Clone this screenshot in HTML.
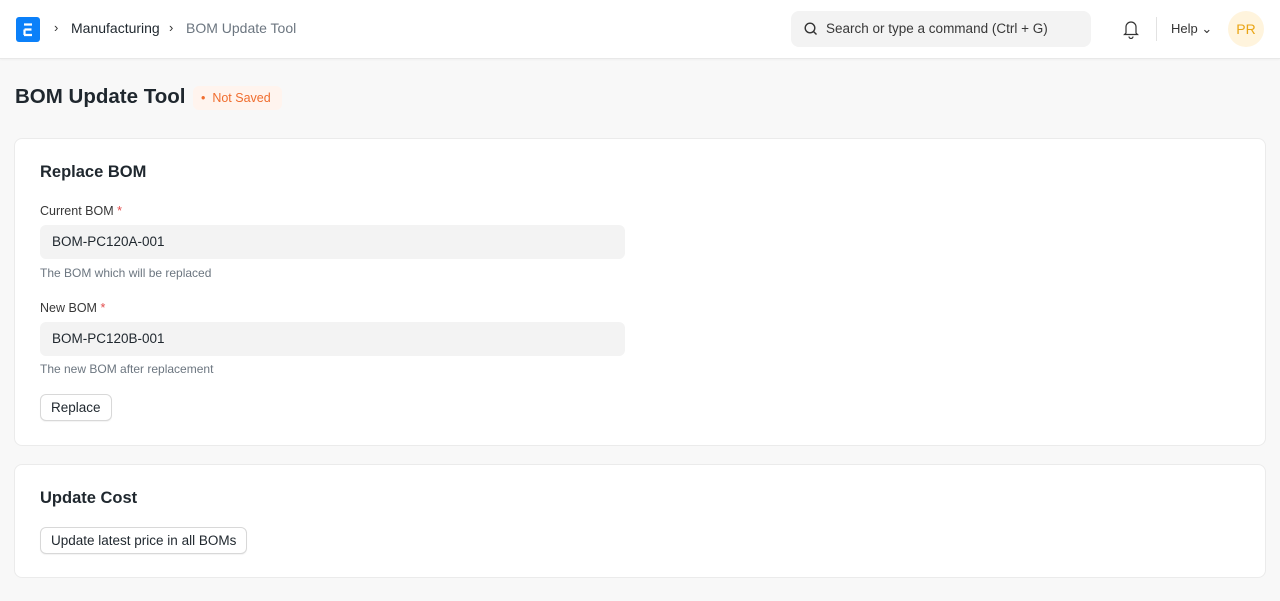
<!DOCTYPE html>
<html><head><style>
*{box-sizing:border-box;margin:0;padding:0}
body{width:1280px;height:601px;background:#f8f8f8;font-family:"Liberation Sans",sans-serif;color:#1f272e;overflow:hidden;position:relative}
.nav{position:absolute;left:0;top:0;width:1280px;height:59px;background:#fff;border-bottom:1px solid #e8e8e8;box-shadow:0 1px 2px rgba(0,0,0,.04)}
.abs{position:absolute}
.logo{left:16px;top:17px;width:24px;height:25px;background:#0b80f9;border-radius:3px}
.search{left:791px;top:11px;width:300px;height:36px;background:#f3f3f3;border-radius:8px;font-size:13.5px;color:#383838}
.card{position:absolute;left:14px;width:1252px;background:#fff;border:1px solid #ebebeb;border-radius:8px}
.lbl{font-size:12.5px;color:#383838}
.inp{position:absolute;left:25px;width:585px;height:34px;background:#f3f3f3;border-radius:6px;font-size:13.5px;padding:9px 12px;color:#1f272e}
.help{font-size:12px;color:#6c7680}
.btn{position:absolute;left:25px;height:27px;border:1px solid #d8d8d8;border-radius:6px;background:#fff;font-size:13.5px;padding:5px 10px;box-shadow:0 1px 1px rgba(0,0,0,.05)}
h2{font-size:16.5px;font-weight:bold;position:absolute;left:25px}
</style></head><body>
<div class="nav">
 <div class="abs logo"><svg width="24" height="25"><path d="M8 7.5h8M8.5 12.5h7M8 18h8M8.5 12.5v5.5" stroke="#fff" stroke-width="2.2" fill="none"/></svg></div>
 <div class="abs" style="left:54px;top:20px;font-size:13px;color:#333">›</div>
 <div class="abs" style="left:71px;top:20px;font-size:14px;color:#1f272e">Manufacturing</div>
 <div class="abs" style="left:169px;top:20px;font-size:13px;color:#333">›</div>
 <div class="abs" style="left:186px;top:20px;font-size:14px;color:#6c7680">BOM Update Tool</div>
 <div class="abs search"><svg class="abs" style="left:13px;top:11px" width="14" height="14"><circle cx="6" cy="6" r="4.8" stroke="#333" stroke-width="1.4" fill="none"/><path d="M9.5 9.5l3 3" stroke="#333" stroke-width="1.4"/></svg><span class="abs" style="left:35px;top:10px">Search or type a command (Ctrl + G)</span></div>
 <svg class="abs" style="left:1122px;top:19px" width="18" height="20"><path d="M4 14V8a5 5 0 0 1 10 0v6l1.5 1.5h-13z M7 17.5a2 2 0 0 0 4 0" stroke="#333" stroke-width="1.2" fill="none"/></svg>
 <div class="abs" style="left:1156px;top:17px;width:1px;height:24px;background:#e2e2e2"></div>
 <div class="abs" style="left:1171px;top:21px;font-size:13px;color:#333">Help ⌄</div>
 <div class="abs" style="left:1228px;top:11px;width:36px;height:36px;border-radius:50%;background:#fff4dd;color:#e9a515;font-size:14px;text-align:center;line-height:36px">PR</div>
</div>
<div class="abs" style="left:15px;top:85px;font-size:20.5px;font-weight:bold">BOM Update Tool</div>
<div class="abs" style="left:193px;top:86px;width:89px;height:24px;background:#fff4ee;border-radius:6px;color:#f06d2e;font-size:12.5px;line-height:24px;padding-left:8px">• &nbsp;Not Saved</div>
<div class="card" style="top:138px;height:308px">
 <h2 style="top:24px">Replace BOM</h2>
 <div class="abs lbl" style="left:25px;top:65px">Current BOM <span style="color:#e24c4c">*</span></div>
 <div class="inp" style="top:86px">BOM-PC120A-001</div>
 <div class="abs help" style="left:25px;top:127px">The BOM which will be replaced</div>
 <div class="abs lbl" style="left:25px;top:162px">New BOM <span style="color:#e24c4c">*</span></div>
 <div class="inp" style="top:183px">BOM-PC120B-001</div>
 <div class="abs help" style="left:25px;top:223px">The new BOM after replacement</div>
 <div class="btn" style="top:255px">Replace</div>
</div>
<div class="card" style="top:464px;height:114px">
 <h2 style="top:24px">Update Cost</h2>
 <div class="btn" style="top:62px">Update latest price in all BOMs</div>
</div>
</body></html>
